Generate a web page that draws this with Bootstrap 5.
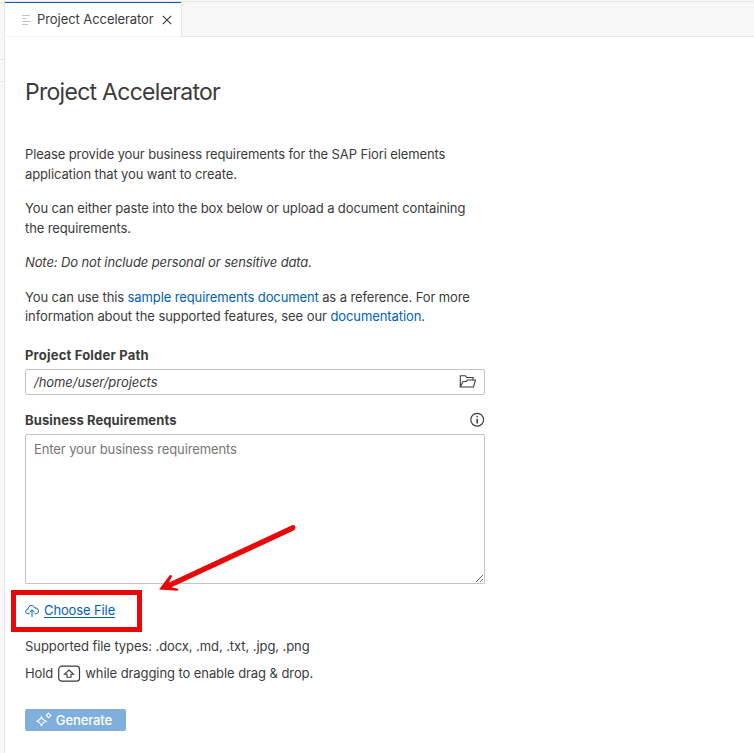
<!DOCTYPE html>
<html lang="en">
<head>
<meta charset="utf-8">
<meta name="viewport" content="width=device-width, initial-scale=1">
<title>Project Accelerator</title>
<link href="https://cdn.jsdelivr.net/npm/bootstrap@5.3.0/dist/css/bootstrap.min.css" rel="stylesheet">
<style>
body{font-family:Inter,"Liberation Sans",sans-serif;font-size:13px;line-height:19.5px;letter-spacing:-.08px;color:#3b3b3b;height:753px;overflow:hidden;background:#fff}
a{color:#005fb8}
svg{display:block;flex:none}
.side{width:5px;background:#f8f8f8;border-right:1px solid #e5e5e5;padding-top:59px}
.side div{height:23px;border:solid #e5e5e5;border-width:1px 0}
.tabs{height:37px;padding-top:1px;background:#f8f8f8}
.tabs .rest{border-top:1px solid #e5e5e5;border-bottom:1px solid #e5e5e5;border-left:1px solid #e5e5e5}
.tab{width:176px;background:#fff;border-top:1px solid #e5e5e5;box-shadow:inset 0 1px #005fb8;padding:1px 9px 0 17px;border-bottom:1px solid #f6f6f6}
.tab .name{margin-left:5px;width:117px;font-size:13px;letter-spacing:-.07px}
.page{width:480px;padding-left:20px}
h1{font-size:23px;font-weight:400;line-height:30px;margin:40px 0 38px;letter-spacing:-.72px}
.intro p{margin-bottom:15px;white-space:nowrap;letter-spacing:-.115px}
.intro .info{letter-spacing:-.082px}
.lbl{font-weight:700;line-height:20px;letter-spacing:.11px}
.lbl.folder{margin-top:18px;letter-spacing:.2px}
.lbl.reqs{margin-top:15px}
.page .path{height:26px;border:1px solid #c4c4c4;border-radius:2px;padding:0 8px;font-style:italic;font-size:13px;line-height:24px;color:#3b3b3b;letter-spacing:-.05px}
.page textarea{height:150px;border:1px solid #c4c4c4;border-radius:2px;padding:5px 8px;font-size:13px;line-height:19.5px;display:block;resize:vertical;letter-spacing:-.1px}
.page textarea::placeholder{color:#767676;opacity:1}
.file{height:20px;margin-top:17px}
.file a{margin-left:5px;text-underline-offset:2px;letter-spacing:-.12px}
.hilite{left:-14px;top:-11px;width:131px;height:42px;border:5px solid #e90808}
.arrow{left:155px;top:520px;pointer-events:none}
.types{margin-top:16px;letter-spacing:-.075px}
.hold{margin-top:8px}
.hold svg{margin:0 4px 0 5px}
.page .gen{width:101px;height:22px;margin-top:25px;background:#80afdb;color:#fff;border:0;border-radius:2px;font-size:13px;font-weight:500;padding:0 14px 0 11px;line-height:22px;letter-spacing:-.12px}
</style>
<script src="https://cdn.jsdelivr.net/npm/bootstrap@5.3.0/dist/js/bootstrap.bundle.min.js"></script>
</head>
<body class="d-flex position-relative">
<aside class="side flex-shrink-0"><div></div></aside>
<main class="flex-grow-1">
  <div class="tabs d-flex">
    <div class="tab d-flex align-items-center flex-shrink-0">
      <svg width="10" height="10" viewBox="0 0 10 10" stroke="#c4c4c4" stroke-width="1"><path d="M0 .5h8M0 3.500h4.500M5.500 6.500H9M0 6.500h8.500M0 9.500h6"/></svg>
      <span class="name text-nowrap">Project Accelerator</span>
      <svg class="ms-auto" width="10" height="10" viewBox="0 0 10 10" stroke="#3b3b3b" stroke-width="1.100"><path d="M.8.8l8.400 8.400M9.200.8L.8 9.200"/></svg>
    </div>
    <div class="rest flex-grow-1"></div>
  </div>
  <div class="page">
    <h1>Project Accelerator</h1>
    <div class="intro">
      <p>Please provide your business requirements for the SAP Fiori elements<br>application that you want to create.</p>
      <p>You can either paste into the box below or upload a document containing<br>the requirements.</p>
      <p class="fst-italic">Note: Do not include personal or sensitive data.</p>
      <p>You can use this <a class="text-decoration-none" href="#">sample requirements document</a> as a reference. For more<br><span class="info">information about the supported features, see our <a class="text-decoration-none" href="#">documentation</a>.</span></p>
    </div>
    <div class="lbl folder">Project Folder Path</div>
    <div class="path form-control d-flex align-items-center justify-content-between mt-1">
      <span>/home/user/projects</span>
      <svg width="17" height="14" viewBox="0 0 17 14" fill="none" stroke="#3b3b3b" stroke-width="1.100"><path d="M1.300 12V.8h5l1.500 1.700H14V5M1.300 12L4 6.500h3L8.500 5h8L14.500 12z"/></svg>
    </div>
    <div class="lbl reqs d-flex align-items-center justify-content-between">Business Requirements
      <svg width="15" height="15" viewBox="0 0 15 15" fill="none" stroke="#3b3b3b" stroke-width="1.200"><circle cx="7.200" cy="7.700" r="6.400"/><path d="M7.200 6.700v4.700M7.200 3.800v1.500" stroke-width="1.500"/></svg>
    </div>
    <textarea class="form-control mt-1" placeholder="Enter your business requirements"></textarea>
    <div class="file d-flex align-items-center position-relative">
      <svg width="14" height="12" viewBox="0 0 14 12" fill="none" stroke="#005fb8" stroke-width="1"><path d="M4.500 8.700H3C-.1 8.500-.1 4.500 3 4.300 3.300-.5 9-.5 10 3c4.500-.3 4.500 5.500.8 5.700H9.500M7 12V5M4.500 7.300L7 4.800l2.500 2.500"/></svg>
      <a href="#">Choose File</a>
      <div class="hilite position-absolute"></div>
    </div>
    <div class="types">Supported file types: .docx, .md, .txt, .jpg, .png</div>
    <div class="hold d-flex align-items-center text-nowrap">Hold
      <svg width="23" height="17" viewBox="0 0 23 17" fill="none" stroke="#3b3b3b"><rect x=".7" y="1.200" width="20.800" height="15" rx="3" stroke-width="1.200"/><path d="M11 5L15.500 9.200H13v3H9v-3H6.500z" stroke-width="1.100"/></svg>
      <span>while dragging to enable drag &amp; drop.</span>
    </div>
    <button class="btn gen d-flex align-items-center justify-content-between">
      <svg width="16" height="16" viewBox="0 0 16 16" fill="none" stroke="#fff" stroke-width="1.100"><path d="M5.500 5Q6.500 8 10 9.300 6.500 10.500 5.500 13.500 4.300 10.500 1 9.300 4.300 8 5.500 5zM12.500 1.200l2.300 2.300-2.300 2.300-2.300-2.300z"/></svg>
      Generate
    </button>
  </div>
</main>
<svg class="arrow position-absolute" width="145" height="75" viewBox="155 520 145 75" fill="#e90808"><path d="M292 525.200Q295 524.700 295.500 527.500 295.700 529.500 293.700 530.500L171.500 587.300 178 588.800Q179 590.500 177 590.800L159 589.500 169.500 575.500Q171.800 574.300 172 576.500L169 582.500z"/></svg>
</body>
</html>
